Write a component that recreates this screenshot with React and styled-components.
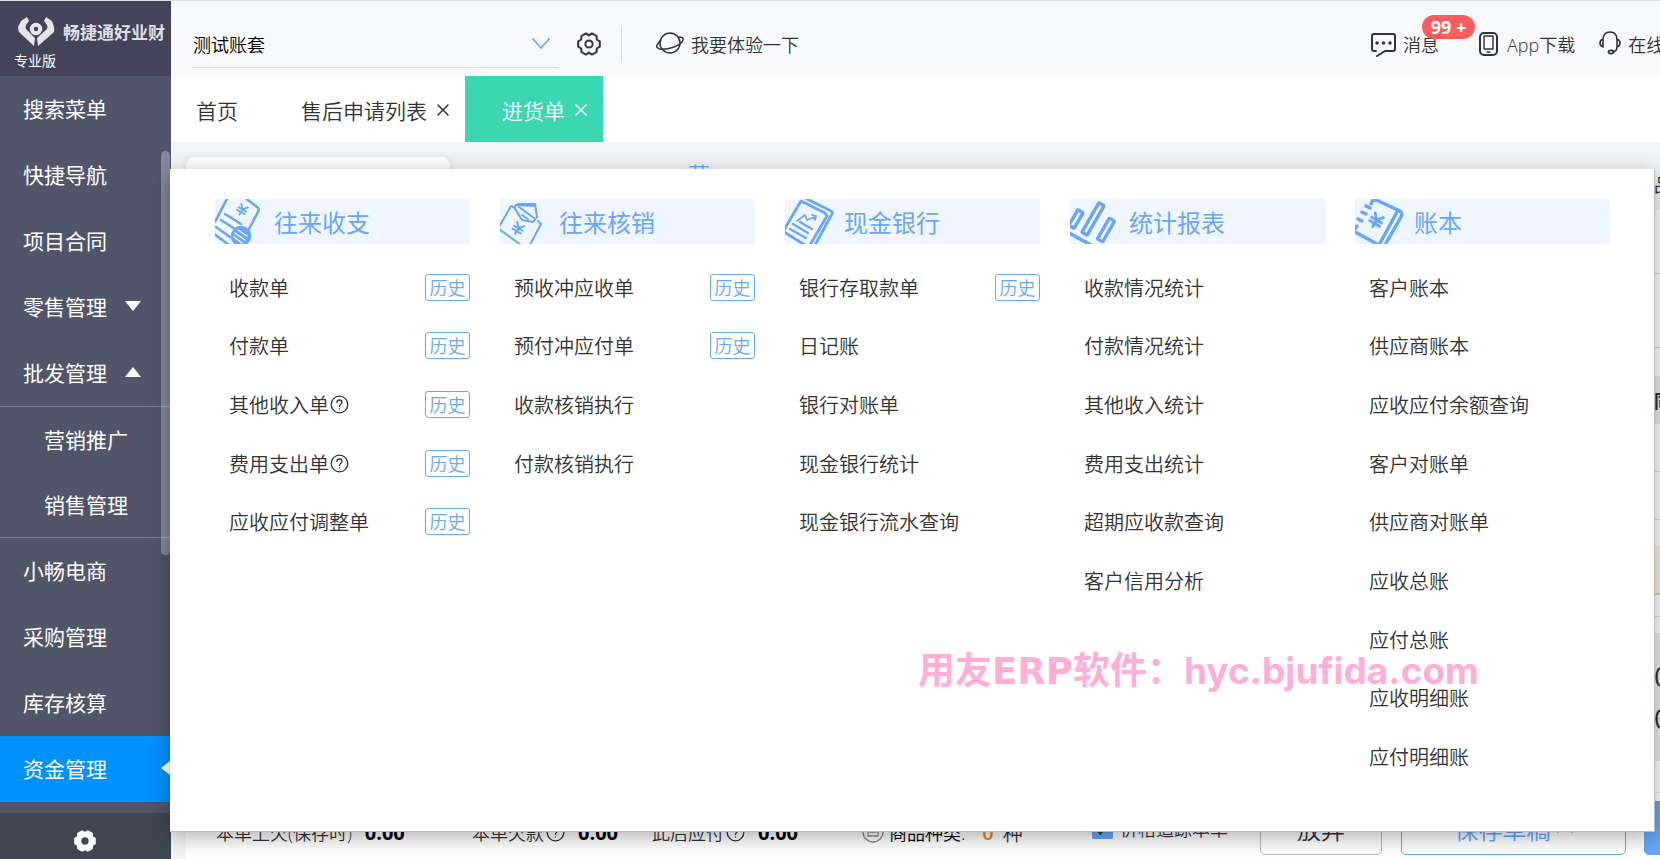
import React from 'react'
import styled, { createGlobalStyle } from 'styled-components'

const blue = '#68a6f8'
const ink = '#333333'

//#region styles
const GlobalStyle = createGlobalStyle`
  * {
    box-sizing: border-box;
  }

  body {
    margin: 0;
    overflow: hidden;
    font-family: 'Open Sans', 'Noto Sans CJK SC', sans-serif;
    font-weight: 350;
    color: ${ink};
  }

  a {
    color: inherit;
    text-decoration: none;
  }

  ul {
    margin: 0;
    padding: 0;
    list-style: none;
  }

  button,
  select {
    margin: 0;
    padding: 0;
    border: 0;
    background: none;
    color: inherit;
    font: inherit;
    cursor: pointer;
  }

  svg {
    display: block;
    flex: none;
  }
`
const Page = styled.div`
  position: relative;
  display: flex;
  height: 100vh;
  border-top: 1px solid #dcdde0;
`
const Sidebar = styled.aside`
  position: relative;
  display: flex;
  flex-direction: column;
  flex: none;
  width: 171px;
  background: #51556a;
  color: white;
`
const Brand = styled.div`
  height: 75px;
  padding: 14px 0 0 14px;
  background: #444359;
  font-size: 14px;
  font-weight: 400;
  line-height: 20px;
  white-space: nowrap;
`
const BrandName = styled.div`
  display: flex;
  align-items: center;
  gap: 6px;
  height: 36px;
  margin-left: 2px;
  color: #dfdfe4;
  font-size: 17px;
  font-weight: 700;
  overflow: hidden;
`
const NavLink = styled.a`
  display: flex;
  align-items: center;
  gap: 18px;
  position: relative;
  height: ${(props) => (props.$sub ? 65 : 66)}px;
  padding: 0 0 2px ${(props) => (props.$sub ? 44 : 23)}px;
  background: ${(props) => (props.$active ? '#0091ff' : 'transparent')};
  font-size: 21px;
  font-weight: 400;
`
const SubMenu = styled.div`
  border: solid #7f8291;
  border-width: 1px 0;
`
const Pointer = styled.span`
  position: absolute;
  right: 1px;
  top: 25px;
  border: solid transparent;
  border-width: 7px 9px 7px 0;
  border-right-color: white;
`
const ScrollThumb = styled.div`
  position: absolute;
  top: 150px;
  right: 1px;
  width: 9px;
  height: 404px;
  border-radius: 5px;
  background: rgba(255, 255, 255, 0.3);
`
const SidebarFooter = styled.button`
  display: flex;
  align-items: center;
  justify-content: center;
  height: 46px;
  margin-top: auto;
  padding: 9px 2px 0 0;
  background: #414653;
`
const Main = styled.main`
  display: flex;
  flex-direction: column;
  flex: 1;
  min-width: 0;
`
const Header = styled.header`
  display: flex;
  align-items: center;
  height: 75px;
  flex: none;
  padding: 10px 0 0 22px;
  background: #f8f9fd;
  font-size: 18px;
  overflow: hidden;
`
const Account = styled.div`
  display: flex;
  align-items: center;
  width: 365px;
  height: 48px;
  margin-right: 19px;
  border-bottom: 1px solid #d9d9d9;
  color: black;

  > select {
    flex: 1;
    height: 44px;
    padding-top: 4px;
    appearance: none;
    outline: none;
  }

  > svg {
    margin-right: 8px;
  }
`
const Divider = styled.span`
  width: 1px;
  height: 38px;
  margin: 0 34px 0 20px;
  background: #d9dade;
`
const HeaderLink = styled.a`
  display: flex;
  align-items: center;
  position: relative;
  gap: ${(props) => props.$gap || 7}px;
  white-space: nowrap;
`
const HeaderLinks = styled.nav`
  display: flex;
  align-items: center;
  gap: 24px;
  width: 289px;
  height: 75px;
  margin-left: auto;
  overflow: hidden;

  > :first-child {
    margin-right: 16px;
  }
`
const CountBadge = styled.span`
  position: absolute;
  left: 51px;
  top: -16px;
  width: 53px;
  height: 24px;
  border-radius: 12px;
  background: #ff5c5c;
  color: white;
  font-size: 18px;
  font-weight: 700;
  line-height: 24px;
  text-align: center;
`
const Tabs = styled.div`
  display: flex;
  flex: none;
  height: 66px;
  background: white;
  font-size: 21px;
`
const Tab = styled.div`
  display: flex;
  align-items: center;
  gap: 10px;
  padding: ${(props) => (props.$home ? '2px 26px 0 25px' : '2px 16px 0 37px')};
  background: ${(props) => (props.$active ? '#3bd6b2' : 'transparent')};
  color: ${(props) => (props.$active ? 'white' : ink)};
`
const Workspace = styled.div`
  display: flex;
  flex-direction: column;
  flex: 1;
  min-height: 0;
  padding: 15px 0 0 15px;
  background: #f2f4f6;
`
const SheetTop = styled.div`
  display: flex;
  align-items: center;
  flex: none;
  height: 53px;
`
const SheetTab = styled.div`
  align-self: stretch;
  width: 264px;
  border-radius: 8px 8px 0 0;
  background: white;
  box-shadow: 0 0 6px rgba(0, 0, 0, 0.1);
`
const SheetLink = styled.a`
  flex: 1;
  align-self: flex-start;
  padding-left: 238px;
  color: ${blue};
  font-size: 22px;
  line-height: 34px;
`
const Sheet = styled.div`
  flex: 1;
  min-height: 0;
  background: white;
  overflow: hidden;
`
const SheetRow = styled.div`
  display: flex;
  align-items: center;
  justify-content: flex-end;
  height: ${(props) => props.$height}px;
  border-bottom: ${(props) => (props.$line ? '1px solid #dcdcdc' : 0)};
  background: ${(props) => props.$color || 'transparent'};
`
const EdgeText = styled.span`
  width: 6px;
  font-size: ${(props) => props.$size || 18}px;
  font-weight: ${(props) => props.$weight || 400};
  white-space: nowrap;
  overflow: hidden;
`
const Totals = styled.footer`
  display: grid;
  grid-template-columns: 256px 180px 210px 230px 168px 141px 243px 1fr;
  align-items: center;
  flex: none;
  height: 67px;
  padding: 4px 0 0 30px;
  border-top: 1px solid #f2f2f2;
  background: white;
  font-size: 18px;
  white-space: nowrap;
  overflow: hidden;
`
const Total = styled.div`
  display: flex;
  align-items: center;
  gap: 2px;
  padding-top: 8px;

  > strong {
    margin-left: 11px;
    color: black;
    font-size: 20px;
    font-weight: 700;
  }
`
const Kinds = styled(Total)`
  gap: 5px;
  color: black;

  > b {
    margin-left: 12px;
    color: #e8833a;
    font-size: 20px;
    font-weight: 600;
  }

  > span {
    margin-left: 4px;
    color: ${ink};
    font-size: 20px;
  }
`
const Check = styled.label`
  display: flex;
  align-items: center;
  gap: 7px;

  > input {
    width: 21px;
    height: 21px;
    margin: 0;
    accent-color: ${blue};
  }
`
const FooterButton = styled.button`
  display: flex;
  align-items: center;
  justify-content: center;
  gap: 6px;
  width: ${(props) => props.$width};
  height: 54px;
  border: 1px solid ${(props) => (props.$plain ? '#bbbbbb' : blue)};
  border-radius: 5px;
  background: ${(props) => (props.$filled ? blue : 'white')};
  color: ${(props) => (props.$plain ? ink : blue)};
  font-size: 24px;
`
const MegaMenu = styled.section`
  position: absolute;
  top: 168px;
  right: 5px;
  bottom: 27px;
  left: 170px;
  display: grid;
  grid-template-columns: repeat(5, 1fr);
  gap: 30px;
  padding: 30px 44px 45px 45px;
  border: solid #bdbdbd;
  border-width: 0 1px 1px 0;
  background: white;
  box-shadow: 0 5px 20px rgba(0, 0, 0, 0.32);
`
const Column = styled.div`
  display: flex;
  flex-direction: column;
  gap: 14px;
  min-width: 0;
`
const ColumnTitle = styled.h2`
  display: flex;
  align-items: center;
  gap: 9px;
  height: 45px;
  margin: 0;
  background: #eff6ff;
  color: ${blue};
  font-size: 24px;
  font-weight: 400;
`
const Entries = styled.ul`
  display: grid;
  grid-template-rows: repeat(9, 1fr);
  flex: 1;
`
const Entry = styled.li`
  display: flex;
  align-items: center;
  padding-left: 14px;
  font-size: 20px;
  white-space: nowrap;

  > svg {
    margin-left: 1px;
  }
`
const History = styled.a`
  width: 45px;
  height: 27px;
  margin-left: auto;
  border: 1px solid ${blue};
  border-radius: 3px;
  color: ${blue};
  font-size: 18px;
  line-height: 26px;
  text-align: center;
`
const Watermark = styled.div`
  position: absolute;
  top: 640px;
  left: 918px;
  display: flex;
  align-items: baseline;
  color: #ffaed8;
  font-family: Inter, 'Noto Sans CJK SC', sans-serif;
  font-size: 37px;
  font-weight: 700;
  line-height: 60px;
  white-space: nowrap;
  pointer-events: none;

  > span {
    font-family: 'DejaVu Sans', sans-serif;
  }
`
//#endregion

//#region icons
const line = (width, color = 'currentColor') => ({
  fill: 'none',
  stroke: color,
  strokeWidth: width,
  strokeLinecap: 'round',
  strokeLinejoin: 'round',
})

const Yen = ({ x, y, scale = 1, width = 2 }) => (
  <path
    transform={`translate(${x} ${y}) rotate(30) scale(${scale})`}
    d="M-5 -7 0 -1 5 -7M0 -1V7M-6 -1H6M-6 3H6"
    {...line(width)}
  />
)

const ReceiptIcon = () => (
  <svg width="50" height="45" {...line(2.6)}>
    <path d="M13 -2 0 23M29 -2 42 8Q45 10 43 13L34 30M10 15 26 25M6 21 20 30M1 28 15 38M-1 35 14 46" />
    <Yen x="27" y="11" scale="0.75" width="2.4" />
    <circle cx="26" cy="37" r="9" fill="currentColor" />
    <path d="M23 31 32 37M20 34 30 41M19 38 27 44" {...line(1.5, '#eff6ff')} />
  </svg>
)

const EnvelopeIcon = () => (
  <svg width="50" height="45" {...line(2)}>
    <path d="M-1 28 11 7 15 9M-1 30 21 46M38 22 41 25 30 46" />
    <path d="M14 8 18 5 35 5 37 18 33 23 22 21ZM16 6 35 7M19 8 34 19M22 16 28 20" />
    <Yen x="18" y="30" scale="0.82" width="2.4" />
  </svg>
)

const ReportIcon = () => (
  <svg width="50" height="45" {...line(2.8)}>
    <path d="M20 -1 46 12Q48 13 47 15L30 46M-1 31 16 2 40 14 42 17 25 46M-1 33 20 46" />
    <path d="M8 25 23 34M5 30 21 39M15 23 27 30" {...line(2.2)} />
    <path d="M12 22 20 16 22 21 30 18M27 16 31 17 30 21" {...line(1.8)} />
  </svg>
)

const BarsIcon = () => (
  <svg width="50" height="45" {...line(3.4)}>
    <rect x="-3" y="-9" width="6" height="18" rx="1" transform="translate(6 20) rotate(30)" />
    <rect x="-3" y="-17" width="6" height="34" rx="1" transform="translate(23 20) rotate(30)" />
    <rect x="-3" y="-12" width="6" height="24" rx="1" transform="translate(36 31) rotate(30)" />
    <path d="M-1 34 21 46" />
  </svg>
)

const LedgerIcon = () => (
  <svg width="50" height="45" {...line(3.4)}>
    <path d="M19 0 45 12Q48 14 46 18L30 46M42 13 24 46M18 1 16 5M11 7 15 9M7 13 11 15M3 20 7 22M2 27-1 31M0 33 22 45" />
    <Yen x="21" y="22" scale="0.95" width="3" />
  </svg>
)

const gearPath =
  'M12 3.4 15 1.4 19.6 4 19.8 7.5 22.8 9.3V14.7L19.8 16.5 19.6 20 15 22.6 12 20.6 9 22.6 4.4 20 4.2 16.5 1.2 14.7V9.3L4.2 7.5 4.4 4 9 1.4Z'

const GearIcon = () => (
  <svg width="24" height="24" viewBox="0 0 24 24" {...line(2, ink)}>
    <path d={gearPath} />
    <circle cx="12" cy="12" r="3.6" />
  </svg>
)

const SolidGearIcon = () => (
  <svg width="22" height="22" viewBox="0 0 24 24">
    <path d={gearPath} {...line(2, 'white')} fill="white" />
    <circle cx="12" cy="12" r="4" fill="#414653" />
  </svg>
)

const LogoIcon = () => (
  <svg width="41" height="34" viewBox="0 0 41 34" fill="#e6e6e9">
    <path d="M11 1 5 5 2 11Q2 15 4 17L18 30 19 22 10 13Q9 11 10 9L13 5Z" />
    <path d="M30 1 36 5 38 11Q39 15 37 17L22 30 21 22 31 13Q32 11 31 9L28 5Z" />
    <circle cx="20" cy="13" r="4.2" {...line(4, '#e6e6e9')} />
  </svg>
)

const PlanetIcon = () => (
  <svg width="28" height="24" viewBox="0 0 28 24" {...line(1.5, ink)}>
    <circle cx="14" cy="11" r="10" />
    <path d="M23 5Q28 5 27 8 26 12 18 15 9 18 4 17 0 16 1 13L4 9" />
  </svg>
)

const MessageIcon = () => (
  <svg width="25" height="26" viewBox="0 0 25 26" {...line(2, ink)}>
    <path d="M5 20H3Q1 20 1 18V5Q1 3 3 3H22Q24 3 24 5V18Q24 20 22 20H14L6 25" />
    <path d="M6 12H6.1M12.5 12H12.6M19 12H19.1" strokeWidth="3.4" />
  </svg>
)

const PhoneIcon = () => (
  <svg width="20" height="24" viewBox="0 0 20 24" {...line(2, ink)}>
    <rect x="1" y="1" width="17" height="22" rx="4" />
    <path d="M5 4H14V17H5ZM8 20H11" strokeWidth="1.4" />
  </svg>
)

const HeadsetIcon = () => (
  <svg width="22" height="26" viewBox="0 0 22 26" {...line(1.6, ink)}>
    <path d="M4 9Q4 1 11 1 18 1 18 9M4 8Q1 9 1 12T4 16ZM18 8Q21 9 21 12T18 16ZM18 16Q18 20 14 21" />
    <ellipse cx="12" cy="21" rx="2.6" ry="1.6" />
  </svg>
)

const ChevronIcon = ({ up, size = 18, color = blue }) => (
  <svg width={size} height={size / 2 + 2} viewBox="0 0 18 11" {...line(1.7, color)}>
    <path d={up ? 'M1 10 9 2 17 10' : 'M1 1 9 10 17 1'} />
  </svg>
)

const CloseIcon = () => (
  <svg width="12" height="12" {...line(1.5)}>
    <path d="M1 1 11 11M11 1 1 11" />
  </svg>
)

const HelpIcon = () => (
  <svg width="19" height="19" viewBox="0 0 19 19" {...line(1.3)}>
    <circle cx="9.5" cy="9.5" r="8.3" />
    <path d="M7 7.5Q7 5 9.5 5T12 7.4C12 9 9.5 9 9.5 11.4M9.5 13.8V14" />
  </svg>
)

const BoxIcon = () => (
  <svg width="22" height="22" {...line(1.3, '#8c8c8c')}>
    <circle cx="11" cy="11" r="10" />
    <path d="M6 7H16V15H6ZM8 11H14" />
  </svg>
)

const CaretIcon = ({ up }) => (
  <svg width="16" height="10">
    <path d={up ? 'M0 10 8 0 16 10Z' : 'M0 0 8 10 16 0Z'} fill="white" />
  </svg>
)
//#endregion

const columns = [
  {
    title: '往来收支',
    Icon: ReceiptIcon,
    entries: [
      { name: '收款单', history: true },
      { name: '付款单', history: true },
      { name: '其他收入单', help: true, history: true },
      { name: '费用支出单', help: true, history: true },
      { name: '应收应付调整单', history: true },
    ],
  },
  {
    title: '往来核销',
    Icon: EnvelopeIcon,
    entries: [
      { name: '预收冲应收单', history: true },
      { name: '预付冲应付单', history: true },
      { name: '收款核销执行' },
      { name: '付款核销执行' },
    ],
  },
  {
    title: '现金银行',
    Icon: ReportIcon,
    entries: [
      { name: '银行存取款单', history: true },
      { name: '日记账' },
      { name: '银行对账单' },
      { name: '现金银行统计' },
      { name: '现金银行流水查询' },
    ],
  },
  {
    title: '统计报表',
    Icon: BarsIcon,
    entries: [
      { name: '收款情况统计' },
      { name: '付款情况统计' },
      { name: '其他收入统计' },
      { name: '费用支出统计' },
      { name: '超期应收款查询' },
      { name: '客户信用分析' },
    ],
  },
  {
    title: '账本',
    Icon: LedgerIcon,
    entries: [
      { name: '客户账本' },
      { name: '供应商账本' },
      { name: '应收应付余额查询' },
      { name: '客户对账单' },
      { name: '供应商对账单' },
      { name: '应收总账' },
      { name: '应付总账' },
      { name: '应收明细账' },
      { name: '应付明细账' },
    ],
  },
]

function SideNav() {
  return (
    <Sidebar>
      <Brand>
        <BrandName>
          <LogoIcon />
          畅捷通好业财
        </BrandName>
        专业版
      </Brand>
      <nav>
        <NavLink href="#search">搜索菜单</NavLink>
        <NavLink href="#quick">快捷导航</NavLink>
        <NavLink href="#project">项目合同</NavLink>
        <NavLink href="#retail">
          零售管理
          <CaretIcon />
        </NavLink>
        <NavLink href="#wholesale">
          批发管理
          <CaretIcon up />
        </NavLink>
        <SubMenu>
          <NavLink $sub href="#marketing">营销推广</NavLink>
          <NavLink $sub href="#sales">销售管理</NavLink>
        </SubMenu>
        <NavLink href="#ecommerce">小畅电商</NavLink>
        <NavLink href="#purchase">采购管理</NavLink>
        <NavLink href="#stock">库存核算</NavLink>
        <NavLink $active href="#funds">
          资金管理
          <Pointer />
        </NavLink>
      </nav>
      <SidebarFooter aria-label="设置">
        <SolidGearIcon />
      </SidebarFooter>
      <ScrollThumb />
    </Sidebar>
  )
}

function TopBar() {
  return (
    <Header>
      <Account>
        <select aria-label="账套" defaultValue="test">
          <option value="test">测试账套</option>
        </select>
        <ChevronIcon />
      </Account>
      <button aria-label="设置">
        <GearIcon />
      </button>
      <Divider />
      <HeaderLink href="#try">
        <PlanetIcon />
        我要体验一下
      </HeaderLink>
      <HeaderLinks>
        <HeaderLink href="#messages">
          <MessageIcon />
          消息
          <CountBadge>99 +</CountBadge>
        </HeaderLink>
        <HeaderLink href="#app" $gap={8}>
          <PhoneIcon />
          App下载
        </HeaderLink>
        <HeaderLink href="#service">
          <HeadsetIcon />
          在线客服
        </HeaderLink>
      </HeaderLinks>
    </Header>
  )
}

function OrderSheet() {
  return (
    <Workspace>
      <SheetTop>
        <SheetTab />
        <SheetLink href="#draft">草</SheetLink>
        <EdgeText>品</EdgeText>
      </SheetTop>
      <Sheet>
        <SheetRow $height={64} $line />
        <SheetRow $height={74} $line />
        <SheetRow $height={28} />
        <SheetRow $height={48} $color="#e4e8f4">
          <EdgeText $weight={700}>同</EdgeText>
        </SheetRow>
        <SheetRow $height={48} $line />
        <SheetRow $height={48} $line />
        <SheetRow $height={26} />
        <SheetRow $height={47} $color="#fff0d6" />
        <SheetRow $height={2} $color="#d0d0d0" />
        <SheetRow $height={22} $line />
        <SheetRow $height={16} />
        <SheetRow $height={22} $color="#ebebeb" />
        <SheetRow $height={42} $color="#ebebeb">
          <EdgeText $size={28}>0</EdgeText>
        </SheetRow>
        <SheetRow $height={42} $color="#ebebeb">
          <EdgeText $size={28}>0</EdgeText>
        </SheetRow>
        <SheetRow $height={22} $color="#ebebeb" />
      </Sheet>
      <Totals>
        <Total>
          本单上欠(保存时)
          <strong>0.00</strong>
        </Total>
        <Total>
          本单欠款
          <HelpIcon />
          <strong>0.00</strong>
        </Total>
        <Total>
          此后应付
          <HelpIcon />
          <strong>0.00</strong>
        </Total>
        <Kinds>
          <BoxIcon />
          商品种类:
          <b>0</b>
          <span>种</span>
        </Kinds>
        <Check>
          <input type="checkbox" defaultChecked />
          价格追踪本单
        </Check>
        <FooterButton $plain $width="122px">放弃</FooterButton>
        <FooterButton $width="225px">
          保存草稿
          <ChevronIcon up size={16} />
        </FooterButton>
        <FooterButton $filled $width="160px" aria-label="保存" />
      </Totals>
    </Workspace>
  )
}

function App() {
  return (
    <Page>
      <GlobalStyle />
      <SideNav />
      <Main>
        <TopBar />
        <Tabs>
          <Tab $home>
            <button>首页</button>
          </Tab>
          <Tab>
            <button>售后申请列表</button>
            <button aria-label="关闭售后申请列表">
              <CloseIcon />
            </button>
          </Tab>
          <Tab $active>
            <button>进货单</button>
            <button aria-label="关闭进货单">
              <CloseIcon />
            </button>
          </Tab>
        </Tabs>
        <OrderSheet />
      </Main>
      <MegaMenu>
        {columns.map(({ title, Icon, entries }) => (
          <Column key={title}>
            <ColumnTitle>
              <Icon />
              {title}
            </ColumnTitle>
            <Entries>
              {entries.map((entry) => (
                <Entry key={entry.name}>
                  <a href="#entry">{entry.name}</a>
                  {entry.help && <HelpIcon />}
                  {entry.history && <History href="#history">历史</History>}
                </Entry>
              ))}
            </Entries>
          </Column>
        ))}
      </MegaMenu>
      <Watermark>
        用友<span>ERP</span>软件：hyc.bjufida.com
      </Watermark>
    </Page>
  )
}

export default App
